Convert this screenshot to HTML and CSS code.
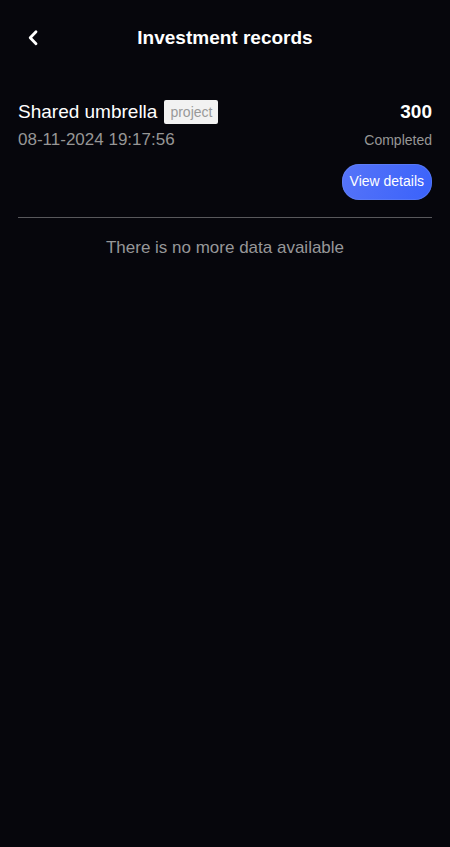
FILE: index.html
```html
<!DOCTYPE html>
<html lang="en">
<head>
<meta charset="utf-8">
<meta name="viewport" content="width=device-width, initial-scale=1">
<title>Investment records</title>
<link rel="stylesheet" href="styles.css">
</head>
<body>
<header class="navbar">
  <button class="back" type="button" aria-label="Back">
    <svg width="20" height="20" viewBox="0 0 20 20" aria-hidden="true"><path d="M13 3.800 7.200 9.800l5.800 6"/></svg>
  </button>
  <h1 class="title">Investment records</h1>
</header>
<main class="records">
  <article class="record">
    <div class="row">
      <h2 class="name">Shared umbrella <span class="tag">project</span></h2>
      <strong class="amount">300</strong>
    </div>
    <div class="row">
      <time class="date">08-11-2024 19:17:56</time>
      <span class="status">Completed</span>
    </div>
    <div class="actions"><button class="details" type="button">View details</button></div>
  </article>
  <p class="finished">There is no more data available</p>
</main>
</body>
</html>
```

FILE: styles.css
```css
* { box-sizing: border-box; }
body {
  margin: 0;
  min-height: 100vh;
  background: #06060c;
  color: #fff;
  font-family: "Liberation Sans", Arial, sans-serif;
}
button { border: 0; padding: 0; font: inherit; color: inherit; cursor: pointer; }
.navbar {
  display: grid;
  grid-template-columns: 30px 1fr 30px;
  align-items: center;
  height: 75px;
  padding: 0 18px;
}
.back { display: grid; place-items: center; height: 30px; background: none; }
.back path { fill: none; stroke: #fff; stroke-width: 2.8; stroke-linecap: round; stroke-linejoin: round; }
.title { margin: 0; font-size: 19px; line-height: 24px; text-align: center; }
.records { padding: 23px 18px; }
.record { padding-bottom: 17px; border-bottom: 1px solid #58585c; }
.row { display: flex; justify-content: space-between; align-items: center; height: 28px; }
.name { display: flex; align-items: center; gap: 7px; margin: 0; font-size: 19px; font-weight: 400; }
.tag {
  padding: 0 6px;
  border-radius: 2px;
  background: #f2f2f2;
  color: #999;
  font-size: 14px;
  line-height: 24px;
}
.amount { font-size: 19px; }
.date { color: #969696; font-size: 17px; }
.status { color: #969696; font-size: 14px; }
.actions { display: flex; justify-content: flex-end; margin-top: 10px; }
.details {
  height: 36px;
  padding: 0 8px 2px;
  border-radius: 17px;
  background: linear-gradient(110deg, #5674f8, #3a62fb);
  box-shadow: inset 0 0 0 1px rgba(120, 150, 240, 0.35);
  font-size: 14px;
}
.finished { margin: 0; color: #969799; font-size: 17px; line-height: 60px; text-align: center; }
```
